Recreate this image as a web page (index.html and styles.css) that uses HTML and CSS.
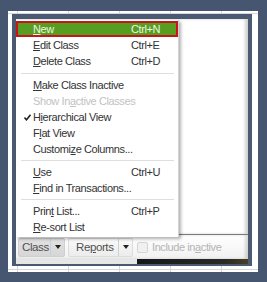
FILE: index.html
```html
<!DOCTYPE html>
<html lang="en">
<head>
    <meta charset="UTF-8">
    <meta name="viewport" content="width=device-width, initial-scale=1.0">
    <title>Class List</title>
    <link rel="stylesheet" href="styles.css">
</head>
<body>
    <div class="desk">
        <div class="window">
            <div class="client">
                <div class="list"></div>

                <!-- Bottom toolbar -->
                <div class="toolbar">
                    <div class="tb-btn pressed">
                        <span class="tb-label">Class</span>
                        <span class="tb-arrow"></span>
                    </div>
                    <div class="tb-btn">
                        <span class="tb-label">Re<u>p</u>orts</span>
                        <span class="tb-arrow"></span>
                    </div>
                    <label class="inactive">
                        <span class="box"></span>
                        <span>Include in<u>a</u>ctive</span>
                    </label>
                </div>
                <div class="statusbar"><span class="status-dark"></span></div>

                <!-- Class menu -->
                <ul class="menu">
                    <li class="item active"><span class="label"><u>N</u>ew</span><span class="key">Ctrl+N</span></li>
                    <li class="item"><span class="label"><u>E</u>dit Class</span><span class="key">Ctrl+E</span></li>
                    <li class="item"><span class="label"><u>D</u>elete Class</span><span class="key">Ctrl+D</span></li>
                    <li class="sep first"></li>
                    <li class="item"><span class="label"><u>M</u>ake Class Inactive</span></li>
                    <li class="item disabled"><span class="label">Show In<u>a</u>ctive Classes</span></li>
                    <li class="item checked">
                        <svg class="check" width="7" height="7" viewBox="0 0 7 7"><path d="M0.5 3.6 L2.5 5.8 L6.5 0.8" fill="none" stroke="#222" stroke-width="1.5"/></svg>
                        <span class="label">H<u>i</u>erarchical View</span>
                    </li>
                    <li class="item"><span class="label">F<u>l</u>at View</span></li>
                    <li class="item"><span class="label">Customi<u>z</u>e Columns...</span></li>
                    <li class="sep"></li>
                    <li class="item"><span class="label"><u>U</u>se</span><span class="key">Ctrl+U</span></li>
                    <li class="item"><span class="label"><u>F</u>ind in Transactions...</span></li>
                    <li class="sep"></li>
                    <li class="item"><span class="label">Prin<u>t</u> List...</span><span class="key">Ctrl+P</span></li>
                    <li class="item"><span class="label"><u>R</u>e-sort List</span></li>
                </ul>
            </div>
        </div>
    </div>
</body>
</html>
```

FILE: styles.css
```css
body {
    margin: 0;
    padding: 0;
    background-color: #465670;
    font-family: "Liberation Sans", Arial, sans-serif;
    font-size: 11px;
    letter-spacing: -0.4px;
    color: #333;
}
u {
    text-decoration-thickness: 1px;
    text-underline-offset: 1px;
}
.desk {
    width: 250px;
    height: 261px;
    margin: 11px 0 0 8px;
    padding: 3px 0 0 4px;
    box-sizing: border-box;
    background-color: #fff;
    background-image:
        linear-gradient(to right, #d6d6d6 1px, transparent 1px),
        linear-gradient(to bottom, #d6d6d6 1px, transparent 1px);
    background-size: 51px 100%, 100% 256px;
    background-position: 9px 0, 0 2px;
}
.window {
    width: 240px;
    height: 252px;
    padding: 5px 4px 2px 4px;
    box-sizing: border-box;
    background: #4a5a72;
}
.client {
    position: relative;
    height: 100%;
    display: flex;
    flex-direction: column;
    background: #fff;
}
.list {
    flex: 1;
    border-bottom: 1px solid #7a7a7a;
    box-shadow: inset -3px 0 3px rgba(0, 0, 0, 0.18);
}
.toolbar {
    height: 24px;
    display: flex;
    align-items: center;
    padding: 0 0 0 2px;
    background: linear-gradient(#ffffff, #f1f1f1);
    box-shadow: inset -3px 0 3px rgba(0, 0, 0, 0.15);
}
.tb-btn {
    height: 19px;
    display: flex;
    align-items: stretch;
    border: 1px solid #dcdcdc;
    border-radius: 2px;
    background: linear-gradient(#fafafa, #ececec);
    font-size: 11.5px;
    color: #505050;
    box-sizing: border-box;
}
.tb-btn.pressed {
    width: 47px;
    margin-right: 3px;
    background: linear-gradient(#e2e2e2, #d6d6d6);
    border-color: #cfcfcf;
}
.tb-btn + .tb-btn {
    width: 65px;
    margin-right: 4px;
}
.tb-label {
    flex: 1;
    display: flex;
    align-items: center;
    padding-left: 3px;
}
.tb-btn + .tb-btn .tb-label {
    padding-left: 7px;
}
.tb-arrow {
    width: 13px;
    border-left: 1px solid #d0d0d0;
    display: flex;
    align-items: center;
    justify-content: center;
}
.tb-arrow::after {
    content: "";
    border-left: 3px solid transparent;
    border-right: 3px solid transparent;
    border-top: 4px solid #222;
}
.inactive {
    display: flex;
    align-items: center;
    gap: 4px;
    color: #b4b4b4;
    font-size: 11px;
}
.box {
    width: 9px;
    height: 9px;
    border: 1px solid #d4d4d4;
    border-radius: 2px;
    background: #f0f0f0;
}
.statusbar {
    height: 5px;
    display: flex;
    justify-content: flex-end;
    background: #e6e6e6;
}
.status-dark {
    width: 111px;
    background: linear-gradient(to right, #15161a, #2a2a26 80%, #4a3e28);
}
.menu {
    position: absolute;
    left: 0;
    top: 1px;
    width: 162px;
    margin: 0;
    padding: 1px 0 2px;
    list-style: none;
    background: #fff;
    border-right: 1px solid #d2d2d2;
    box-shadow: 2px 2px 3px rgba(0, 0, 0, 0.3);
}
.item {
    position: relative;
    height: 16px;
    display: flex;
    align-items: center;
    padding-left: 17px;
    box-sizing: border-box;
}
.item .label {
    flex: 1;
}
.item .key {
    width: 47px;
}
.item.active {
    background: #559e1f;
    border: 2px solid #c8141c;
    padding-left: 15px;
    color: #eef5e6;
}
.item.active .key {
    width: 45px;
}
.item.disabled {
    color: #c2c2c2;
}
.check {
    position: absolute;
    left: 8px;
    top: 5px;
}
.sep {
    height: 7px;
    display: flex;
    align-items: center;
    padding: 0 4px 0 5px;
}
.sep.first {
    height: 8px;
}
.sep::after {
    content: "";
    flex: 1;
    border-top: 1px solid #dedede;
}
```
